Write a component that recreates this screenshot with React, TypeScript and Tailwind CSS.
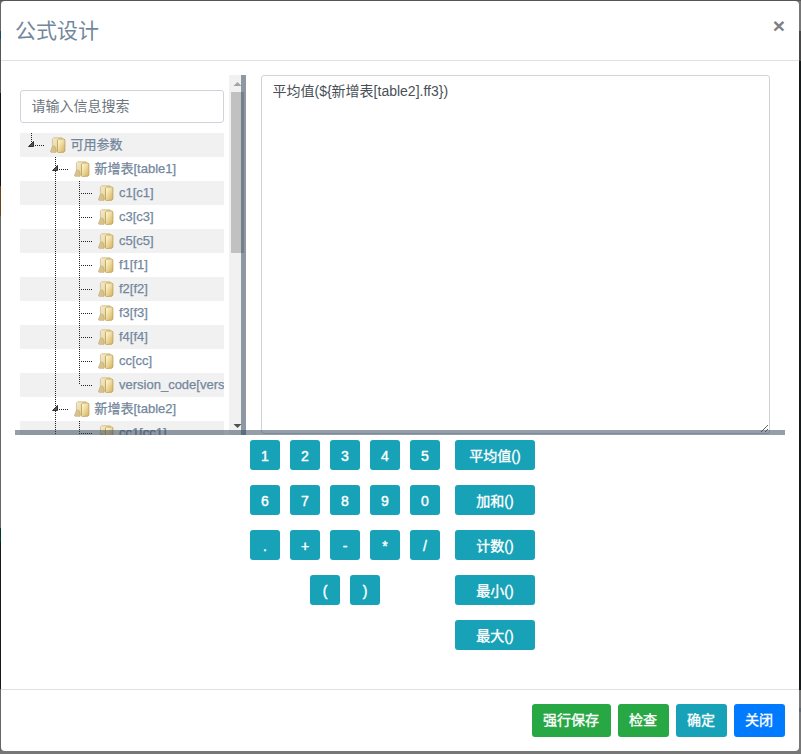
import { ReactNode } from 'react';

const FONT = "font-['Liberation_Sans','Noto_Sans_CJK_SC',sans-serif]";

function FolderIcon() {
  return (
    <svg width="16" height="16" viewBox="0 0 16 16" className="block shrink-0">
      <defs>
        <linearGradient id="back" x1="0" y1="0" x2="1" y2="1">
          <stop offset="0" stopColor="#f6eed0" />
          <stop offset="1" stopColor="#dcc684" />
        </linearGradient>
        <linearGradient id="front" x1="0" y1="0" x2="1" y2="1">
          <stop offset="0" stopColor="#fffdf0" />
          <stop offset="0.4" stopColor="#f1e0a6" />
          <stop offset="1" stopColor="#d3b05e" />
        </linearGradient>
      </defs>
      <path d="M2.4 2 L3.8 0.8 L12 0.8 L12 14 L2.4 14 Z" fill="url(#back)" stroke="#c9b578" strokeWidth="0.7" />
      <path d="M2.3 9.8 L0.5 14.2 L1 15.3 L6.2 15.4 L5.6 10.2 L4 8.8 Z" fill="#d6c38e" stroke="#b9a26a" strokeWidth="0.5" />
      <path d="M7.5 3 L8.4 2.2 L13.9 1.9 L14.9 2.8 L14.9 14 L13.8 15.2 L8.2 15.5 L7.5 14.8 Z" fill="url(#front)" stroke="#bf9d4a" strokeWidth="0.8" />
    </svg>
  );
}

function Guide({ kind }: { kind: 'none' | 'line' | 'tee' | 'end' | 'firstOpen' | 'open' }) {
  const vertical = kind === 'line' || kind === 'tee' || kind === 'open' ? 24 : 12;
  return (
    <svg width="24" height="24" viewBox="0 0 24 24" className="block shrink-0" shapeRendering="crispEdges">
      {kind !== 'none' && <path d={`M11.5 0V${vertical}`} stroke="#222" strokeDasharray="1 1" />}
      {kind !== 'none' && kind !== 'line' && <path d="M13 12.5H24" stroke="#222" strokeDasharray="1 1" />}
      {(kind === 'open' || kind === 'firstOpen') && (
        <path d="M8.5 13.5H13.5V8.5Z" fill="#555" stroke="#222" shapeRendering="auto" strokeWidth="0.9" />
      )}
    </svg>
  );
}

function TreeRow({ level, label, striped, last }: { level: number; label: string; striped?: boolean; last?: boolean }) {
  return (
    <div className={`flex h-6 shrink-0 items-center overflow-hidden whitespace-nowrap ${striped ? 'bg-[#f1f1f1]' : 'bg-white'}`}>
      {level === 0 && <Guide kind="firstOpen" />}
      {level === 1 && (
        <>
          <Guide kind="none" />
          <Guide kind="open" />
        </>
      )}
      {level === 2 && (
        <>
          <Guide kind="none" />
          <Guide kind="line" />
          <Guide kind={last ? 'end' : 'tee'} />
        </>
      )}
      <span className={`ml-1.5 flex items-center ${level === 2 ? 'gap-[5px]' : 'gap-[4.5px]'}`}>
        <FolderIcon />
        <span className="-mt-px text-[13px] leading-[23px] text-[#73879c] [-webkit-text-stroke:0.25px_#73879c]">{label}</span>
      </span>
    </div>
  );
}

function Key({ children, wide }: { children: ReactNode; wide?: boolean }) {
  return (
    <button
      className={`flex h-[30px] items-center justify-center rounded-[3px] bg-[#17a2b8] pt-0.5 text-sm text-white ${
        wide ? 'w-20 [-webkit-text-stroke:0.35px_white]' : 'w-[30px] [-webkit-text-stroke:0.4px_white]'
      }`}
    >
      {children}
    </button>
  );
}

function FooterButton({ children, color }: { children: ReactNode; color: string }) {
  return (
    <button className={`h-[33px] rounded-[3px] pr-3 pb-px pl-[11px] text-sm text-white [-webkit-text-stroke:0.35px_white] ${color}`}>
      {children}
    </button>
  );
}

const fields = ['c1[c1]', 'c3[c3]', 'c5[c5]', 'f1[f1]', 'f2[f2]', 'f3[f3]', 'f4[f4]', 'cc[cc]', 'version_code[version_code]'];
const keyRows = ['12345', '67890', '.+-*/', '()'];
const functions = ['平均值()', '加和()', '计数()', '最小()', '最大()'];

export default function App() {
  return (
    <div className={`flex h-[754px] w-[801px] flex-col bg-[#777] ${FONT}`}>
      <div className="h-px shrink-0 bg-[#555]" />
      <div className="flex h-[750px] shrink-0">
        <div className="flex w-px flex-col">
          <div className="h-[30px] bg-[#666]" />
          <div className="h-2 bg-[#174a70]" />
          <div className="h-[54px] bg-[#555]" />
          <div className="h-[93px] bg-[#151515]" />
          <div className="h-[30px] bg-[#67461c]" />
          <div className="h-[312px] bg-[#666]" />
          <div className="h-3.5 bg-[#023c25]" />
          <div className="h-[147px] bg-[#151a1a]" />
          <div className="flex-1 bg-[#666]" />
        </div>
        <div className="flex w-[798px] flex-col rounded-[4px] bg-white">
          <header className="flex h-[60px] shrink-0 items-start justify-between border-b border-[#dee2e6] pl-[14px] pr-[14px]">
            <h4 className="pt-[14px] text-[21px] leading-[31px] text-[#73879c]">公式设计</h4>
            <button className="pt-[14px] text-[21px] leading-[21px] font-bold text-[#7f7f7f]">×</button>
          </header>
          <div className="h-[628px] shrink-0 px-[14px] pt-[14px]">
            <div className="relative flex h-[360px] w-[770px] overflow-hidden">
              <aside className="relative flex w-[231px] shrink-0">
                <div className="w-[214px] pl-[5px] pt-[15px] pr-[5px]">
                  <input
                    placeholder="请输入信息搜索"
                    className="block h-[33px] w-full rounded-[3px] border border-[#ced4da] px-[10.5px] pb-0.5 text-sm text-[#495057] placeholder:text-[#6c757d]"
                  />
                  <div className="mt-[10px] flex flex-col">
                    <TreeRow level={0} label="可用参数" striped />
                    <TreeRow level={1} label="新增表[table1]" />
                    {fields.map((f, i) => (
                      <TreeRow key={f} level={2} label={f} striped={i % 2 === 0} last={i === fields.length - 1} />
                    ))}
                    <TreeRow level={1} label="新增表[table2]" />
                    <TreeRow level={2} label="cc1[cc1]" striped />
                  </div>
                </div>
                <div className="flex w-[17px] flex-col items-center bg-[#f1f1f1]">
                  <svg width="17" height="17" viewBox="0 0 17 17" className="block">
                    <path d="M4.5 11L8.5 7L12.5 11Z" fill="#a3a3a3" />
                  </svg>
                  <div className="h-[161px] w-[13px] bg-[#c1c1c1]" />
                  <svg width="17" height="17" viewBox="0 0 17 17" className="mt-auto block">
                    <path d="M4.5 6L8.5 10L12.5 6Z" fill="#505050" />
                  </svg>
                </div>
                <div className="absolute inset-y-0 right-0 w-[5px] bg-[#2a3f54]/50" />
              </aside>
              <textarea
                readOnly
                value="平均值(${新增表[table2].ff3})"
                className="ml-[15px] h-[359px] w-[509px] resize rounded-[3px] border border-[#ced4da] px-[10.5px] py-[5px] text-sm leading-[21px] text-[#495057]"
              />
              <div className="absolute inset-x-0 bottom-0 h-[5px] bg-[#2a3f54]/50" />
            </div>
            <div className="ml-[235px] mt-[5px] flex gap-[15px]">
              <div className="flex w-[190px] flex-col gap-[15px]">
                {keyRows.map((row) => (
                  <div key={row} className="flex justify-center gap-2.5">
                    {row.split('').map((k) => (
                      <Key key={k}>{k}</Key>
                    ))}
                  </div>
                ))}
              </div>
              <div className="flex flex-col gap-[15px]">
                {functions.map((f) => (
                  <Key key={f} wide>
                    {f}
                  </Key>
                ))}
              </div>
            </div>
          </div>
          <footer className="flex flex-1 items-start justify-end gap-[7px] rounded-b-[4px] border-t border-[#dee2e6] pt-3.5 pr-[14px]">
            <FooterButton color="bg-[#28a745]">强行保存</FooterButton>
            <FooterButton color="bg-[#28a745]">检查</FooterButton>
            <FooterButton color="bg-[#17a2b8]">确定</FooterButton>
            <FooterButton color="bg-[#007bff]">关闭</FooterButton>
          </footer>
        </div>
        <div className="flex w-0.5 flex-col">
          <div className="h-[30px] bg-[#777]" />
          <div className="h-[30px] bg-[#484848]" />
          <div className="h-[629px] bg-[#151a1a]" />
          <div className="h-[18px] bg-[#777]" />
          <div className="h-1 bg-[#5c6671]" />
          <div className="flex-1 bg-[#777]" />
        </div>
      </div>
    </div>
  );
}
